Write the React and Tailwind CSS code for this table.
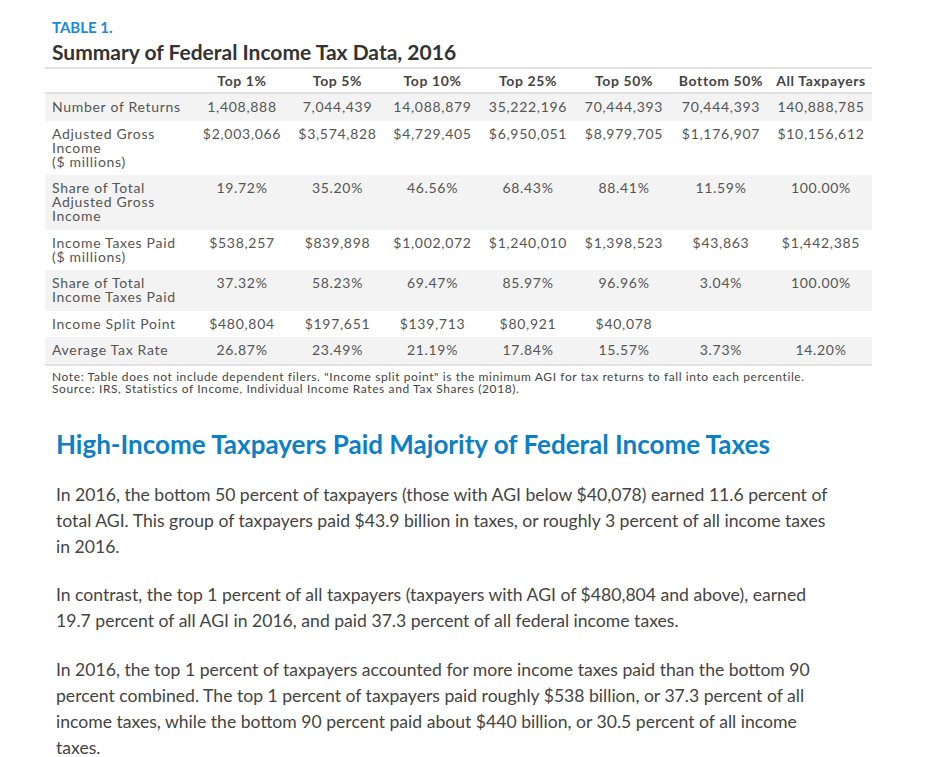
import React from "react";

const cols = ["Top 1%", "Top 5%", "Top 10%", "Top 25%", "Top 50%", "Bottom 50%", "All Taxpayers"];

const rows = [
  { label: ["Number of Returns"], vals: ["1,408,888", "7,044,439", "14,088,879", "35,222,196", "70,444,393", "70,444,393", "140,888,785"], gray: true },
  { label: ["Adjusted Gross", "Income", "($ millions)"], vals: ["$2,003,066", "$3,574,828", "$4,729,405", "$6,950,051", "$8,979,705", "$1,176,907", "$10,156,612"], gray: false },
  { label: ["Share of Total", "Adjusted Gross", "Income"], vals: ["19.72%", "35.20%", "46.56%", "68.43%", "88.41%", "11.59%", "100.00%"], gray: true },
  { label: ["Income Taxes Paid", "($ millions)"], vals: ["$538,257", "$839,898", "$1,002,072", "$1,240,010", "$1,398,523", "$43,863", "$1,442,385"], gray: false },
  { label: ["Share of Total", "Income Taxes Paid"], vals: ["37.32%", "58.23%", "69.47%", "85.97%", "96.96%", "3.04%", "100.00%"], gray: true },
  { label: ["Income Split Point"], vals: ["$480,804", "$197,651", "$139,713", "$80,921", "$40,078", "", ""], gray: false },
  { label: ["Average Tax Rate"], vals: ["26.87%", "23.49%", "21.19%", "17.84%", "15.57%", "3.73%", "14.20%"], gray: true },
];

const grid = "grid grid-cols-[149px_96px_95px_95px_96px_96px_98px_102px]";

export default function App() {
  return (
    <div className="min-h-[757px] w-[937px] bg-white text-[#444]" style={{ fontFamily: "Lato, 'Noto Sans', sans-serif" }}>
      <div className="ml-[45px] w-[827px] pt-[18px]">
        <div className="pl-[7px] text-[15px] font-bold leading-[18px] text-[#1a8ad4]">TABLE 1.</div>
        <div className="pl-[7px] pt-[3px] text-[21px] font-bold leading-[26px] text-[#333]">Summary of Federal Income Tax Data, 2016</div>
        <div className="mt-[2px] border-t-2 border-b-2 border-[#e2e2e2]">
          <div className={`${grid} h-[23px] items-center text-[14px] font-bold leading-[14px] tracking-[0.6px] text-[#444]`}>
            <div />
            {cols.map((c) => (
              <div key={c} className="text-center whitespace-nowrap">{c}</div>
            ))}
          </div>
        </div>
        <div className="border-b-2 border-[#e2e2e2]">
          {rows.map((r, i) => (
            <div key={i} className={`${grid} py-[6.25px] text-[14px] leading-[14px] tracking-[0.7px] text-[#555] ${r.gray ? "bg-[#f3f3f3]" : "bg-white"}`}>
              <div className="pl-[7px]">
                {r.label.map((l, j) => (
                  <div key={j} className="whitespace-nowrap">{l}</div>
                ))}
              </div>
              {r.vals.map((v, j) => (
                <div key={j} className="text-center whitespace-nowrap">{v}</div>
              ))}
            </div>
          ))}
        </div>
        <div className="pl-[7px] pt-[5px] text-[12px] leading-[12px] tracking-[0.6px] text-[#444]">
          <div>Note: Table does not include dependent filers. "Income split point" is the minimum AGI for tax returns to fall into each percentile.</div>
          <div>Source: IRS, Statistics of Income, Individual Income Rates and Tax Shares (2018).</div>
        </div>
      </div>
      <div className="ml-[56px] w-[786px] pt-[34px]">
        <h2 className="text-[26px] font-bold leading-[30px] text-[#0b7fc7]">High-Income Taxpayers Paid Majority of Federal Income Taxes</h2>
        <div className="pt-[23px] text-[17.6px] leading-[26px] text-[#444]">
          <p>In 2016, the bottom 50 percent of taxpayers (those with AGI below $40,078) earned 11.6 percent of total AGI. This group of taxpayers paid $43.9 billion in taxes, or roughly 3 percent of all income taxes in 2016.</p>
          <p className="mt-[22px]">In contrast, the top 1 percent of all taxpayers (taxpayers with AGI of $480,804 and above), earned 19.7 percent of all AGI in 2016, and paid 37.3 percent of all federal income taxes.</p>
          <p className="mt-[23px]">In 2016, the top 1 percent of taxpayers accounted for more income taxes paid than the bottom 90 percent combined. The top 1 percent of taxpayers paid roughly $538 billion, or 37.3 percent of all income taxes, while the bottom 90 percent paid about $440 billion, or 30.5 percent of all income taxes.</p>
        </div>
      </div>
    </div>
  );
}
